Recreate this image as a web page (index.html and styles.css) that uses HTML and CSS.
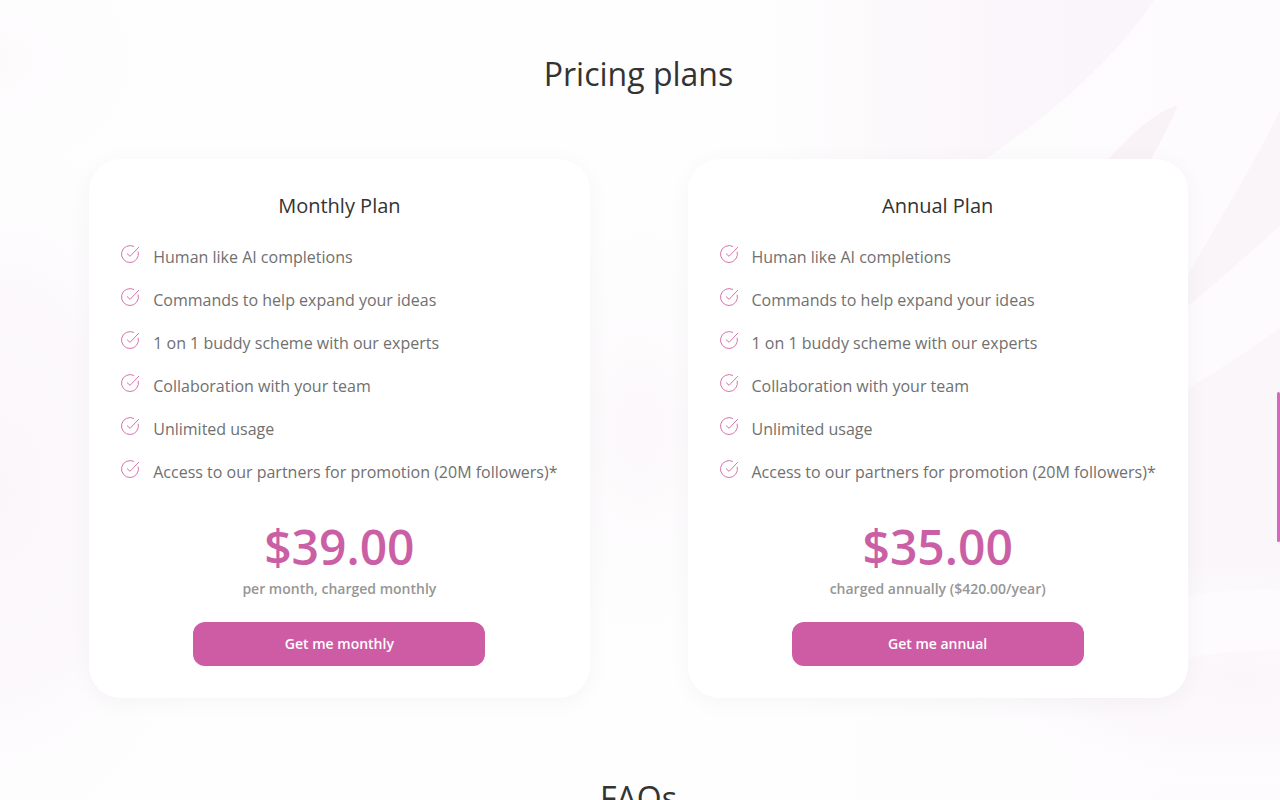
FILE: index.html
```html
<!DOCTYPE html>
<html lang="en">
<head>
<meta charset="utf-8">
<meta name="viewport" content="width=device-width, initial-scale=1">
<title>Pricing plans</title>
<link rel="stylesheet" href="styles.css">
</head>
<body>
<svg class="backdrop" viewBox="0 0 1280 800" preserveAspectRatio="none" aria-hidden="true">
  <defs>
    <linearGradient id="leaf" gradientUnits="userSpaceOnUse" x1="760" y1="0" x2="1150" y2="0">
      <stop offset="0" stop-color="#fbf6fa" stop-opacity="0"/>
      <stop offset="0.6" stop-color="#fbf6fa"/>
      <stop offset="1" stop-color="#faf5fa"/>
    </linearGradient>
    <linearGradient id="veil" gradientUnits="userSpaceOnUse" x1="800" y1="0" x2="1180" y2="0">
      <stop offset="0" stop-color="#fdfbfd" stop-opacity="0"/>
      <stop offset="1" stop-color="#fdfbfd"/>
    </linearGradient>
    <radialGradient id="mist">
      <stop offset="0" stop-color="#fbf6fa"/>
      <stop offset="0.5" stop-color="#fcf9fc"/>
      <stop offset="1" stop-color="#fefefe" stop-opacity="0"/>
    </radialGradient>
    <radialGradient id="glow">
      <stop offset="0" stop-color="#fcf7fb"/>
      <stop offset="1" stop-color="#fefefe" stop-opacity="0"/>
    </radialGradient>
  </defs>
  <rect width="1280" height="800" fill="#fefefe"/>
  <ellipse cx="0" cy="60" rx="190" ry="160" fill="url(#glow)" opacity=".6"/>
  <ellipse cx="0" cy="490" rx="240" ry="400" fill="url(#mist)"/>
  <ellipse cx="640" cy="430" rx="160" ry="260" fill="url(#glow)"/>
  <rect x="800" width="480" height="800" fill="url(#veil)"/>
  <path d="M760 0H1154C1115 60 1050 115 985 160H760Z" fill="url(#leaf)"/>
  <path d="M1178 105C1150 114 1125 140 1090 180H1138C1152 158 1168 130 1178 105Z" fill="#f9f3f7"/>
  <path d="M1280 110C1252 170 1215 225 1180 290V312C1215 285 1252 250 1280 226Z" fill="#f9f5f9"/>
  <path d="M1280 328C1250 350 1215 372 1180 394V598C1215 591 1250 589 1280 590Z" fill="#faf6fa"/>
  <ellipse cx="1240" cy="680" rx="330" ry="120" fill="url(#mist)"/>
  <path d="M1280 590C1250 589 1215 591 1180 598V660C1215 652 1250 650 1280 650Z" fill="#fdfbfd"/>
</svg>
<svg class="sprite" aria-hidden="true">
  <symbol id="check" viewBox="0 0 18 18">
    <path d="M17.3 7.1A8.5 8.5 0 1 1 12.6 1.3"/>
    <path d="M6.3 8.8 9.1 11.3 17.6 2.4"/>
  </symbol>
</svg>

<main class="page">
  <section class="pricing" aria-labelledby="pricing-title">
    <h2 class="section-title" id="pricing-title">Pricing plans</h2>
    <div class="plans">
      <article class="plan">
        <h3 class="plan-name">Monthly Plan</h3>
        <ul class="features">
          <li class="feature"><svg class="tick" aria-hidden="true"><use href="#check"/></svg>Human like AI completions</li>
          <li class="feature"><svg class="tick" aria-hidden="true"><use href="#check"/></svg>Commands to help expand your ideas</li>
          <li class="feature"><svg class="tick" aria-hidden="true"><use href="#check"/></svg>1 on 1 buddy scheme with our experts</li>
          <li class="feature"><svg class="tick" aria-hidden="true"><use href="#check"/></svg>Collaboration with your team</li>
          <li class="feature"><svg class="tick" aria-hidden="true"><use href="#check"/></svg>Unlimited usage</li>
          <li class="feature"><svg class="tick" aria-hidden="true"><use href="#check"/></svg>Access to our partners for promotion (20M followers)*</li>
        </ul>
        <p class="price">$39.00</p>
        <p class="terms">per month, charged monthly</p>
        <button class="buy" type="button">Get me monthly</button>
      </article>
      <article class="plan">
        <h3 class="plan-name">Annual Plan</h3>
        <ul class="features">
          <li class="feature"><svg class="tick" aria-hidden="true"><use href="#check"/></svg>Human like AI completions</li>
          <li class="feature"><svg class="tick" aria-hidden="true"><use href="#check"/></svg>Commands to help expand your ideas</li>
          <li class="feature"><svg class="tick" aria-hidden="true"><use href="#check"/></svg>1 on 1 buddy scheme with our experts</li>
          <li class="feature"><svg class="tick" aria-hidden="true"><use href="#check"/></svg>Collaboration with your team</li>
          <li class="feature"><svg class="tick" aria-hidden="true"><use href="#check"/></svg>Unlimited usage</li>
          <li class="feature"><svg class="tick" aria-hidden="true"><use href="#check"/></svg>Access to our partners for promotion (20M followers)*</li>
        </ul>
        <p class="price">$35.00</p>
        <p class="terms">charged annually ($420.00/year)</p>
        <button class="buy" type="button">Get me annual</button>
      </article>
    </div>
  </section>
  <section class="faqs">
    <h2 class="section-title">FAQs</h2>
  </section>
</main>
<div class="scroll-thumb" aria-hidden="true"></div>
</body>
</html>
```
FILE: styles.css
```css
* {
  box-sizing: border-box;
  margin: 0;
  padding: 0;
}

body {
  height: 100vh;
  overflow: hidden;
  background: #fefefe;
  color: #333;
  font-family: "Open Sans", sans-serif;
  font-size: 16px;
}

.backdrop {
  position: absolute;
  inset: 0;
  z-index: -1;
  width: 100%;
  height: 100%;
}

.sprite {
  display: none;
}

.page {
  padding-right: 3px;
}

.pricing {
  padding: 50px 40px 76px;
}

.section-title {
  font-size: 32px;
  font-weight: 400;
  line-height: 48px;
  text-align: center;
}

.plans {
  display: flex;
  flex-wrap: wrap;
  justify-content: center;
  gap: 40px 98px;
  margin-top: 61px;
}

.plan {
  display: flex;
  flex-direction: column;
  padding: 32px;
  border-radius: 32px;
  background: #fff;
  box-shadow: 0 4px 24px rgba(0, 0, 0, 0.04);
}

.plan-name {
  font-size: 20px;
  font-weight: 400;
  line-height: 30px;
  text-align: center;
}

.features {
  display: grid;
  gap: 19px;
  margin-top: 24px;
  list-style: none;
  color: #707070;
}

.feature {
  display: flex;
  gap: 14px;
  line-height: 24px;
}

.tick {
  flex: none;
  width: 18px;
  height: 18px;
  overflow: visible;
  fill: none;
  stroke: #d573ad;
  stroke-width: 1;
  stroke-linecap: round;
  stroke-linejoin: round;
}

.price {
  margin-top: 32px;
  color: #cb5fa6;
  font-size: 48px;
  font-weight: 600;
  line-height: 62px;
  text-align: center;
}

.terms {
  color: #969696;
  font-size: 14px;
  font-weight: 600;
  line-height: 22px;
  text-align: center;
}

.buy {
  align-self: center;
  width: 292px;
  max-width: 100%;
  height: 44px;
  margin-top: 22px;
  border: 0;
  border-radius: 12px;
  background: #cd5ca5;
  color: #fff;
  font: 600 14px/20px "Open Sans", sans-serif;
  cursor: pointer;
}

.scroll-thumb {
  position: fixed;
  top: 49%;
  right: 0;
  width: 3px;
  height: 150px;
  border-radius: 2px;
  background: #d469bd;
}
```
